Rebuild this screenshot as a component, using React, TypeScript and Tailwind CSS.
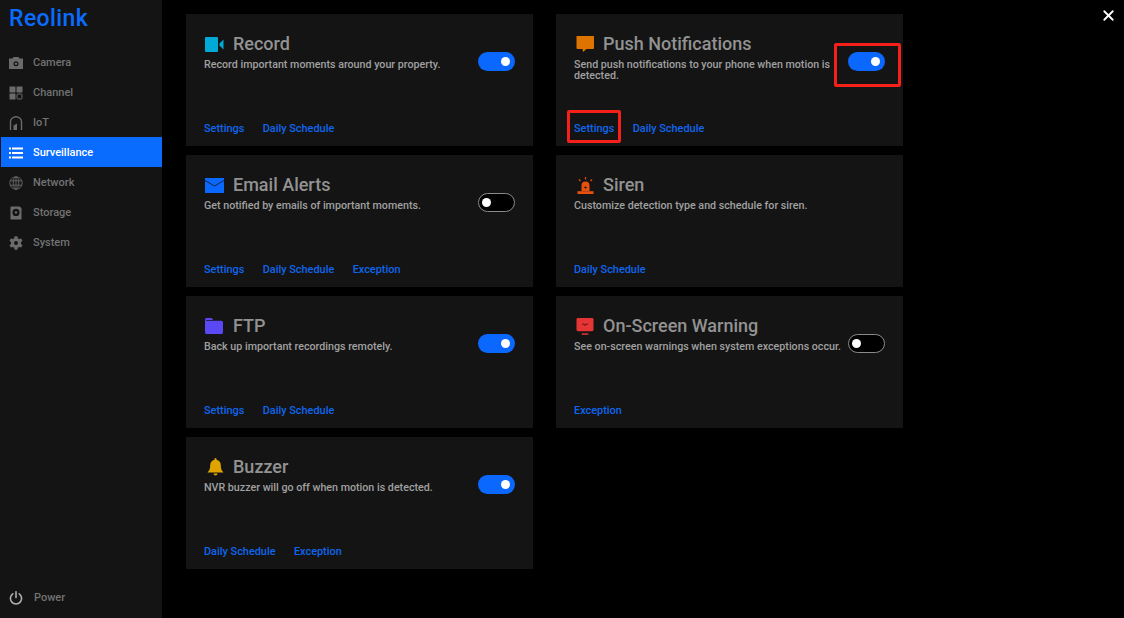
import type { ReactNode } from "react"
import { X } from "lucide-react"

const font = { fontFamily: "Roboto, 'Liberation Sans', sans-serif" }

function CameraIcon() {
  return (
    <svg viewBox="0 0 14 14" className="h-[14px] w-[14px]">
      <path fillRule="evenodd" fill="#6b6b6b" d="M0 2.500h3.500l1-1.600h5l1 1.600H14v10.500H0zM7 5.200a2.500 2.500 0 1 0 0 5 2.500 2.500 0 0 0 0-5z" />
      <circle cx="7" cy="7.700" r="1.200" fill="#6b6b6b" />
    </svg>
  )
}

function ChannelIcon() {
  return (
    <svg viewBox="0 0 14 14" className="h-[14px] w-[14px]">
      <rect x="0.500" y="0.500" width="6" height="6" rx="0.600" fill="#6b6b6b" />
      <rect x="7.500" y="0.500" width="6" height="6" rx="0.600" fill="#6b6b6b" />
      <rect x="0.500" y="7.500" width="6" height="6" rx="0.600" fill="#6b6b6b" />
      <rect x="8" y="8" width="5" height="5" rx="0.600" fill="none" stroke="#6b6b6b" />
    </svg>
  )
}

function IotIcon() {
  return (
    <svg viewBox="0 0 14 14" className="h-[14px] w-[14px]">
      <path d="M1.500 14V5.500C1.500 3 4 .8 7 .8s5.500 2.200 5.500 4.700V14" fill="none" stroke="#6b6b6b" strokeWidth="1.400" />
      <path d="M4.500 14V9.500L8 7.500V14z" fill="#6b6b6b" />
    </svg>
  )
}

function ListIcon() {
  return (
    <svg viewBox="0 0 14 14" className="h-[14px] w-[14px]">
      <path d="M0 1.500h2v2H0zM3 1.500h11v2H3zM0 6h2v2H0zM3 6h11v2H3zM0 10.500h2v2H0zM3 10.500h11v2H3z" fill="#fff" />
    </svg>
  )
}

function GlobeIcon() {
  return (
    <svg viewBox="0 0 14 14" className="h-[14px] w-[14px]" fill="none" stroke="#6b6b6b" strokeWidth="0.900">
      <circle cx="7" cy="7" r="6.200" />
      <ellipse cx="7" cy="7" rx="2.800" ry="6.200" />
      <path d="M7 .8v12.400M1.200 4.800h11.600M1.200 9.200h11.600" />
    </svg>
  )
}

function StorageIcon() {
  return (
    <svg viewBox="0 0 14 14" className="h-[14px] w-[14px]">
      <path fillRule="evenodd" fill="#6b6b6b" d="M2 .5h8.500L12.500 2v11.500H1.500V1zM7 2.800a3.600 3.600 0 1 0 0 7.200 3.600 3.600 0 0 0 0-7.200z" />
      <circle cx="7" cy="6.400" r="1.200" fill="#6b6b6b" />
    </svg>
  )
}

function GearIcon() {
  return (
    <svg viewBox="0 0 14 14" className="h-[14px] w-[14px]">
      <path fillRule="evenodd" fill="#6b6b6b" d="M5.600.3h2.800l.4 1.900 1.400.8 1.900-.6 1.400 2.400-1.500 1.300v1.800l1.500 1.300-1.400 2.400-1.900-.6-1.400.8-.4 1.900H5.600l-.4-1.900-1.400-.8-1.900.6L.5 9.200 2 7.900V6.100L.5 4.800 1.900 2.400l1.900.6 1.400-.8zM7 5a2 2 0 1 0 0 4 2 2 0 0 0 0-4z" />
    </svg>
  )
}

function PowerIcon() {
  return (
    <svg viewBox="0 0 14 14" className="h-[14px] w-[14px]" fill="none" stroke="#b0b0b0" strokeWidth="1.600" strokeLinecap="round">
      <path d="M7 .8v5.700" />
      <path d="M3.800 2.800a5.600 5.600 0 1 0 6.400 0" />
    </svg>
  )
}

function VideoIcon() {
  return (
    <svg viewBox="0 0 20 15" className="h-[15px] w-[20px]">
      <path d="M1 1a1 1 0 0 1 1-1h11a1 1 0 0 1 1 1v13a1 1 0 0 1-1 1H2a1 1 0 0 1-1-1z" fill="#00a9d6" />
      <path d="M15.500 6.500 19.500 2.500v10l-4-4z" fill="#00a9d6" />
    </svg>
  )
}

function ChatIcon() {
  return (
    <svg viewBox="0 0 19 16" className="ml-[1px] h-[16px] w-[19px]">
      <path d="M1.500 0h17a.5.5 0 0 1 .5.500v11.500a1 1 0 0 1-1 1h-6.500L8 16l-.5-3H2.500a1 1 0 0 1-1-1V.5z" fill="#dd7400" />
    </svg>
  )
}

function MailIcon() {
  return (
    <svg viewBox="0 0 19 15" className="ml-[1px] h-[15px] w-[19px]">
      <rect width="19" height="15" fill="#0a68ff" />
      <path d="M0 2.500 9.500 8 19 2.500" fill="none" stroke="#141414" strokeWidth="0.800" />
    </svg>
  )
}

function SirenIcon() {
  return (
    <svg viewBox="0 0 17 17" className="ml-[3px] h-[17px] w-[17px]">
      <path d="M4.500 14V8.500a4 4 0 0 1 8 0V14z" fill="#e8500f" />
      <path d="M0.500 14.200h16V17h-16z" fill="#e8500f" />
      <path d="M9 8 7 11h1.800L8 13l2-3H8.300z" fill="#141414" />
      <path d="M8.500 0v2.500M2 2.500l1.500 1.500M15 2.500 13.500 4" stroke="#e8500f" strokeWidth="1.200" />
    </svg>
  )
}

function FolderIcon() {
  return (
    <svg viewBox="0 0 19 16" className="h-[16px] w-[19px]">
      <path d="M1 1.500A1.500 1.500 0 0 1 2.500 0h4.500a1.500 1.500 0 0 1 1.200.6L9 2H2v.7h15.500A1.500 1.500 0 0 1 19 4.200v10.300a1.500 1.500 0 0 1-1.500 1.500h-15A1.500 1.500 0 0 1 1 14.500z" fill="#5a48f5" />
    </svg>
  )
}

function MonitorIcon() {
  return (
    <svg viewBox="0 0 18 18" className="ml-[2px] h-[17px] w-[18px]">
      <rect width="18" height="14" rx="1.500" fill="#e53535" />
      <path d="M5.500 17h7" stroke="#e53535" strokeWidth="1.600" />
      <path d="M6 6.500h2l1 1.500 1-1.500h2" fill="none" stroke="#5a1010" strokeWidth="1" />
    </svg>
  )
}

function BellIcon() {
  return (
    <svg viewBox="0 0 17 18" className="ml-[3px] h-[18px] w-[17px]">
      <path d="M8.500 0a1 1 0 0 1 1 1v.7c2.800.5 4.300 2.800 4.300 5.600 0 3.300.8 5.300 2.700 7.200H.5c1.900-1.900 2.700-3.900 2.700-7.200 0-2.800 1.500-5.100 4.300-5.600V1a1 1 0 0 1 1-1z" fill="#e0a400" />
      <path d="M6.500 15.500h4a2 2 0 0 1-4 0z" fill="#e0a400" />
    </svg>
  )
}

const navItems = [
  { label: "Camera", icon: <CameraIcon /> },
  { label: "Channel", icon: <ChannelIcon /> },
  { label: "IoT", icon: <IotIcon /> },
  { label: "Surveillance", icon: <ListIcon />, active: true },
  { label: "Network", icon: <GlobeIcon /> },
  { label: "Storage", icon: <StorageIcon /> },
  { label: "System", icon: <GearIcon /> },
]

function Toggle({ on }: { on: boolean }) {
  if (on) {
    return (
      <div className="flex h-[19px] w-[37px] shrink-0 items-center justify-end rounded-full bg-[#0a68ff] pr-[5px]">
        <div className="h-[9px] w-[9px] rounded-full bg-white" />
      </div>
    )
  }
  return (
    <div className="flex h-[19px] w-[37px] shrink-0 items-center rounded-full border border-[#8a8a8a] bg-black pl-[3px]">
      <div className="h-[9px] w-[9px] rounded-full bg-white" />
    </div>
  )
}

type CardProps = {
  icon: ReactNode
  title: string
  desc: string
  on?: boolean
  links: string[]
  toggleMark?: boolean
  settingsMark?: boolean
}

function Card({ icon, title, desc, on, links, toggleMark, settingsMark }: CardProps) {
  return (
    <div className="relative flex h-[132px] w-[347px] flex-col justify-between bg-[#141414] pr-[18px] pb-[11px] pl-[18px]">
      <div className="flex justify-between pt-[19px]">
        <div className="w-[270px]">
          <div className="flex h-[22px] items-center">
            <div className="flex w-[29px] shrink-0 items-center">{icon}</div>
            <span className="text-[18px] leading-[22px] font-medium text-[#929292]">{title}</span>
          </div>
          <p className="mt-[4px] text-[10.7px] leading-[11px] font-medium text-[#a0a0a0]">{desc}</p>
        </div>
        {on !== undefined && (
          <div className="pt-[19px]">
            <Toggle on={on} />
          </div>
        )}
      </div>
      <div className="flex gap-[18.4px]">
        {links.map((l) => (
          <span key={l} className="text-[10.9px] leading-[13px] font-medium text-[#0f66ee]">
            {l}
          </span>
        ))}
      </div>
      {toggleMark && (
        <div className="absolute top-[29px] left-[278px] h-[44px] w-[67px] rounded-[2px] border-[3px] border-[#f5201a]" />
      )}
      {settingsMark && (
        <div className="absolute top-[96px] left-[11px] h-[33px] w-[54px] rounded-[2px] border-[3px] border-[#f5201a]" />
      )}
    </div>
  )
}

export default function App() {
  return (
    <div className="flex h-[618px] w-[1124px] overflow-hidden bg-black" style={font}>
      <aside className="flex h-full w-[162px] shrink-0 flex-col bg-[#141414]">
        <div className="h-[47px] pt-[6px] pl-[9px] text-[23px] leading-[26px] font-medium tracking-[0.4px] text-[#0a6cff]">
          Reolink
        </div>
        <nav className="flex flex-col">
          {navItems.map((item) => (
            <div
              key={item.label}
              className={
                item.active
                  ? "ml-px flex h-[30px] items-center gap-[10px] bg-[#0a6cff] pt-[2px] pl-[8px] text-[11px] font-medium text-white"
                  : "ml-px flex h-[30px] items-center gap-[10px] pt-[2px] pl-[8px] text-[11px] font-medium text-[#727272]"
              }
            >
              {item.icon}
              <span>{item.label}</span>
            </div>
          ))}
        </nav>
        <div className="mt-auto mb-[6px] ml-px flex h-[30px] items-center gap-[11px] pt-[2px] pl-[8px] text-[11px] font-medium text-[#727272]">
          <PowerIcon />
          <span>Power</span>
        </div>
      </aside>

      <main className="relative flex flex-1 gap-[23px] pt-[14px] pl-[24px]">
        <div className="flex flex-col gap-[9px]">
          <Card icon={<VideoIcon />} title="Record" desc="Record important moments around your property." on links={["Settings", "Daily Schedule"]} />
          <Card icon={<MailIcon />} title="Email Alerts" desc="Get notified by emails of important moments." on={false} links={["Settings", "Daily Schedule", "Exception"]} />
          <Card icon={<FolderIcon />} title="FTP" desc="Back up important recordings remotely." on links={["Settings", "Daily Schedule"]} />
          <Card icon={<BellIcon />} title="Buzzer" desc="NVR buzzer will go off when motion is detected." on links={["Daily Schedule", "Exception"]} />
        </div>
        <div className="flex flex-col gap-[9px]">
          <Card icon={<ChatIcon />} title="Push Notifications" desc="Send push notifications to your phone when motion is detected." on links={["Settings", "Daily Schedule"]} toggleMark settingsMark />
          <Card icon={<SirenIcon />} title="Siren" desc="Customize detection type and schedule for siren." links={["Daily Schedule"]} />
          <Card icon={<MonitorIcon />} title="On-Screen Warning" desc="See on-screen warnings when system exceptions occur." on={false} links={["Exception"]} />
        </div>
        <X className="absolute top-[7px] right-[7px] h-[17px] w-[17px] text-white" strokeWidth={2.5} />
      </main>
    </div>
  )
}
